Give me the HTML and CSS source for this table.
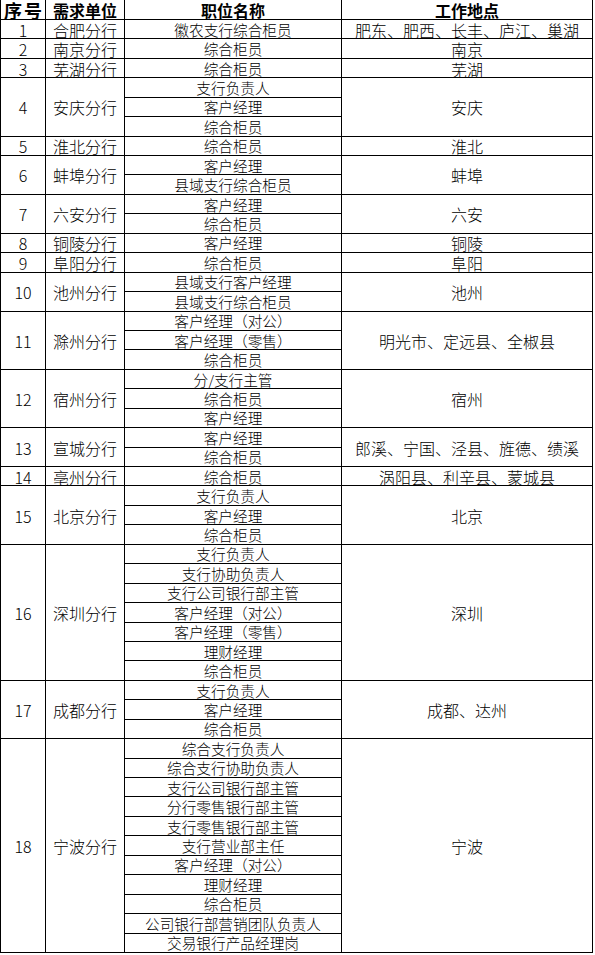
FILE: index.html
```html
<!DOCTYPE html>
<html lang="zh">
<head>
<meta charset="utf-8">
<title>职位表</title>
<link rel="stylesheet" href="styles.css">
</head>
<body>
<table class="sheet">
  <colgroup>
    <col class="c-no">
    <col class="c-unit">
    <col class="c-job">
    <col class="c-loc">
  </colgroup>
  <thead>
    <tr>
      <th class="h-no">序号</th>
      <th>需求单位</th>
      <th>职位名称</th>
      <th>工作地点</th>
    </tr>
  </thead>
  <tbody>
    <tr><td class="no">1</td><td class="unit">合肥分行</td><td class="job">徽农支行综合柜员</td><td class="loc">肥东、肥西、长丰、庐江、巢湖</td></tr>
    <tr><td class="no">2</td><td class="unit">南京分行</td><td class="job">综合柜员</td><td class="loc">南京</td></tr>
    <tr><td class="no">3</td><td class="unit">芜湖分行</td><td class="job">综合柜员</td><td class="loc">芜湖</td></tr>

    <tr><td class="no" rowspan="3">4</td><td class="unit" rowspan="3">安庆分行</td><td class="job">支行负责人</td><td class="loc" rowspan="3">安庆</td></tr>
    <tr><td class="job">客户经理</td></tr>
    <tr><td class="job">综合柜员</td></tr>

    <tr><td class="no">5</td><td class="unit">淮北分行</td><td class="job">综合柜员</td><td class="loc">淮北</td></tr>

    <tr><td class="no" rowspan="2">6</td><td class="unit" rowspan="2">蚌埠分行</td><td class="job">客户经理</td><td class="loc" rowspan="2">蚌埠</td></tr>
    <tr><td class="job">县域支行综合柜员</td></tr>

    <tr><td class="no" rowspan="2">7</td><td class="unit" rowspan="2">六安分行</td><td class="job">客户经理</td><td class="loc" rowspan="2">六安</td></tr>
    <tr><td class="job">综合柜员</td></tr>

    <tr><td class="no">8</td><td class="unit">铜陵分行</td><td class="job">客户经理</td><td class="loc">铜陵</td></tr>
    <tr><td class="no">9</td><td class="unit">阜阳分行</td><td class="job">综合柜员</td><td class="loc">阜阳</td></tr>

    <tr><td class="no" rowspan="2">10</td><td class="unit" rowspan="2">池州分行</td><td class="job">县域支行客户经理</td><td class="loc" rowspan="2">池州</td></tr>
    <tr><td class="job">县域支行综合柜员</td></tr>

    <tr><td class="no" rowspan="3">11</td><td class="unit" rowspan="3">滁州分行</td><td class="job">客户经理（对公）</td><td class="loc" rowspan="3">明光市、定远县、全椒县</td></tr>
    <tr><td class="job">客户经理（零售）</td></tr>
    <tr><td class="job">综合柜员</td></tr>

    <tr><td class="no" rowspan="3">12</td><td class="unit" rowspan="3">宿州分行</td><td class="job">分/支行主管</td><td class="loc" rowspan="3">宿州</td></tr>
    <tr><td class="job">综合柜员</td></tr>
    <tr><td class="job">客户经理</td></tr>

    <tr><td class="no" rowspan="2">13</td><td class="unit" rowspan="2">宣城分行</td><td class="job">客户经理</td><td class="loc" rowspan="2">郎溪、宁国、泾县、旌德、绩溪</td></tr>
    <tr><td class="job">综合柜员</td></tr>

    <tr><td class="no">14</td><td class="unit">亳州分行</td><td class="job">综合柜员</td><td class="loc">涡阳县、利辛县、蒙城县</td></tr>

    <tr><td class="no" rowspan="3">15</td><td class="unit" rowspan="3">北京分行</td><td class="job">支行负责人</td><td class="loc" rowspan="3">北京</td></tr>
    <tr><td class="job">客户经理</td></tr>
    <tr><td class="job">综合柜员</td></tr>

    <tr><td class="no" rowspan="7">16</td><td class="unit" rowspan="7">深圳分行</td><td class="job">支行负责人</td><td class="loc" rowspan="7">深圳</td></tr>
    <tr><td class="job">支行协助负责人</td></tr>
    <tr><td class="job">支行公司银行部主管</td></tr>
    <tr><td class="job">客户经理（对公）</td></tr>
    <tr><td class="job">客户经理（零售）</td></tr>
    <tr><td class="job">理财经理</td></tr>
    <tr><td class="job">综合柜员</td></tr>

    <tr><td class="no" rowspan="3">17</td><td class="unit" rowspan="3">成都分行</td><td class="job">支行负责人</td><td class="loc" rowspan="3">成都、达州</td></tr>
    <tr><td class="job">客户经理</td></tr>
    <tr><td class="job">综合柜员</td></tr>

    <tr><td class="no" rowspan="11">18</td><td class="unit" rowspan="11">宁波分行</td><td class="job">综合支行负责人</td><td class="loc" rowspan="11">宁波</td></tr>
    <tr><td class="job">综合支行协助负责人</td></tr>
    <tr><td class="job">支行公司银行部主管</td></tr>
    <tr><td class="job">分行零售银行部主管</td></tr>
    <tr><td class="job">支行零售银行部主管</td></tr>
    <tr><td class="job">支行营业部主任</td></tr>
    <tr><td class="job">客户经理（对公）</td></tr>
    <tr><td class="job">理财经理</td></tr>
    <tr><td class="job">综合柜员</td></tr>
    <tr><td class="job">公司银行部营销团队负责人</td></tr>
    <tr><td class="job">交易银行产品经理岗</td></tr>
  </tbody>
</table>
</body>
</html>
```

FILE: styles.css
```css
html, body {
  margin: 0;
  padding: 0;
  background: #ffffff;
}

body {
  font-family: "Noto Sans CJK SC", "Noto Sans", sans-serif;
  color: #000000;
}

.sheet {
  border-collapse: collapse;
  table-layout: fixed;
  width: 593px;
  border-left: 1px solid #000;
  border-right: 1px solid #000;
  border-bottom: 1px solid #000;
}

.c-no { width: 45px; }
.c-unit { width: 79px; }
.c-job { width: 217px; }
.c-loc { width: 251px; }

.sheet tr {
  height: 19.4375px;
}

.sheet th,
.sheet td {
  border: 1px solid #000;
  padding: 1px 0 0;
  text-align: center;
  vertical-align: middle;
  line-height: 16px;
  white-space: nowrap;
  font-weight: 300;
}

.sheet thead th {
  border-top: none;
  font-size: 16px;
  font-weight: 700;
}

.sheet th.h-no {
  font-size: 18px;
  letter-spacing: 2px;
  text-indent: 2px;
}

.no {
  font-size: 16px;
}

.unit {
  font-size: 16px;
}

.job {
  font-size: 14.67px;
}

.loc {
  font-size: 16px;
}
```
